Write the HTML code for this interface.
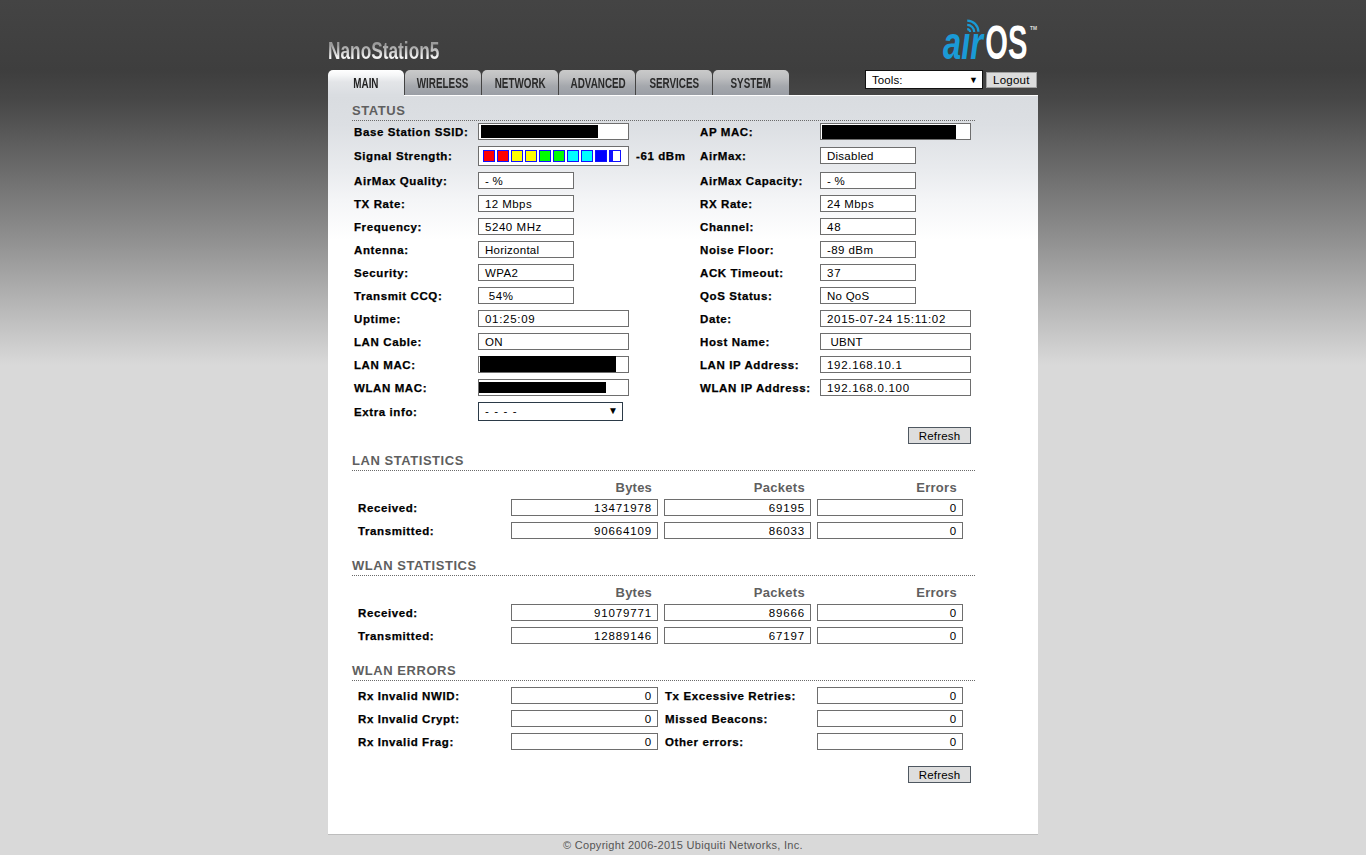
<!DOCTYPE html>
<html><head><meta charset="utf-8"><title>Main</title>
<style>
html,body{margin:0;padding:0;}
body{width:1366px;height:855px;overflow:hidden;position:relative;font-family:"Liberation Sans", sans-serif;
background:linear-gradient(to bottom,#444444 0px,#3e3e3e 70px,#474747 100px,#909090 240px,#d9d9d9 365px,#d9d9d9 855px);}
.t{position:absolute;white-space:nowrap;font-family:"Liberation Sans", sans-serif;}
.b{position:absolute;}
</style></head><body>
<div class="t" style="left:328px;top:37px;font-size:24px;line-height:28px;font-weight:bold;transform:scaleX(0.72);transform-origin:0 0;background:linear-gradient(to bottom,#9a9a9a 8px,#f4f4f4 20px);-webkit-background-clip:text;background-clip:text;color:transparent">NanoStation5</div>
<svg class="b" style="left:930px;top:10px" width="115" height="60" viewBox="0 0 115 60">
<g fill="none" stroke="#1a9ad6" stroke-width="2.2" stroke-linecap="butt">
<path d="M37.2 10.6 A11.2 11.2 0 0 1 48.4 21.8"/>
<path d="M37.2 14.9 A7 7 0 0 1 44.2 21.9"/>
<path d="M37.2 19.1 A2.9 2.9 0 0 1 40.1 22"/>
</g>
<text x="13" y="48.5" font-family="Liberation Sans" font-style="italic" font-weight="bold" font-size="46" fill="#1a9ad6" textLength="40" lengthAdjust="spacingAndGlyphs">a&#305;r</text>
<text x="55.2" y="49.3" font-family="Liberation Sans" font-weight="bold" font-size="49" fill="#ffffff" textLength="42.2" lengthAdjust="spacingAndGlyphs">OS</text>
<text x="100" y="20.3" font-family="Liberation Sans" font-weight="bold" font-size="5" fill="#dddddd" textLength="7" lengthAdjust="spacingAndGlyphs">TM</text>
</svg>
<div class="b" style="left:328px;top:70px;width:76px;height:26px;background:linear-gradient(to bottom,#ffffff 0px,#f6f7f8 5px,#e3e5e8 12px,#dadde1 25px);border-radius:5px 5px 0 0"></div>
<div class="t" style="left:328px;top:75px;width:76px;text-align:center;font-size:14px;line-height:17px;color:#222"><span style="display:inline-block;font-weight:bold;transform:scaleX(0.705)">MAIN</span></div>
<div class="b" style="left:405px;top:70px;width:76px;height:25px;background:linear-gradient(to bottom,#cacaca 0px,#bdbec0 8px,#a5a8ad 16px,#9a9ea5 25px);border-radius:5px 5px 0 0"></div>
<div class="t" style="left:405px;top:75px;width:76px;text-align:center;font-size:14px;line-height:17px;color:#2a2a2a"><span style="display:inline-block;font-weight:bold;transform:scaleX(0.705)">WIRELESS</span></div>
<div class="b" style="left:482px;top:70px;width:76px;height:25px;background:linear-gradient(to bottom,#cacaca 0px,#bdbec0 8px,#a5a8ad 16px,#9a9ea5 25px);border-radius:5px 5px 0 0"></div>
<div class="t" style="left:482px;top:75px;width:76px;text-align:center;font-size:14px;line-height:17px;color:#2a2a2a"><span style="display:inline-block;font-weight:bold;transform:scaleX(0.705)">NETWORK</span></div>
<div class="b" style="left:559px;top:70px;width:76px;height:25px;background:linear-gradient(to bottom,#cacaca 0px,#bdbec0 8px,#a5a8ad 16px,#9a9ea5 25px);border-radius:5px 5px 0 0"></div>
<div class="t" style="left:559px;top:75px;width:76px;text-align:center;font-size:14px;line-height:17px;color:#2a2a2a"><span style="display:inline-block;font-weight:bold;transform:scaleX(0.705)">ADVANCED</span></div>
<div class="b" style="left:636px;top:70px;width:76px;height:25px;background:linear-gradient(to bottom,#cacaca 0px,#bdbec0 8px,#a5a8ad 16px,#9a9ea5 25px);border-radius:5px 5px 0 0"></div>
<div class="t" style="left:636px;top:75px;width:76px;text-align:center;font-size:14px;line-height:17px;color:#2a2a2a"><span style="display:inline-block;font-weight:bold;transform:scaleX(0.705)">SERVICES</span></div>
<div class="b" style="left:713px;top:70px;width:76px;height:25px;background:linear-gradient(to bottom,#cacaca 0px,#bdbec0 8px,#a5a8ad 16px,#9a9ea5 25px);border-radius:5px 5px 0 0"></div>
<div class="t" style="left:713px;top:75px;width:76px;text-align:center;font-size:14px;line-height:17px;color:#2a2a2a"><span style="display:inline-block;font-weight:bold;transform:scaleX(0.705)">SYSTEM</span></div>
<div class="b" style="left:865px;top:70px;width:116px;height:17px;background:#fff;border:1px solid #111;"></div>
<div class="t" style="left:872px;top:73.02px;font-size:11.5px;line-height:14px;font-weight:normal;color:#000;letter-spacing:0.1px;">Tools:</div>
<div class="t" style="left:969px;top:74px;font-size:9px;line-height:12px;color:#000">&#9660;</div>
<div class="b" style="left:986px;top:72px;width:49px;height:14px;background:#dcdcdc;border:1px solid #a0a0a0;"></div>
<div class="t" style="left:993px;top:73.02px;font-size:11.5px;line-height:14px;font-weight:normal;color:#000;letter-spacing:0.25px;">Logout</div>
<div class="b" style="left:328px;top:95px;width:710px;height:739px;background:linear-gradient(to bottom,#fdfdfd 0px,#fdfdfd 1px,#d9dce0 1px,#dcdfe3 30px,#e9ebee 75px,#f4f5f7 105px,#ffffff 145px,#ffffff 100%)"></div>
<div class="b" style="left:328px;top:834px;width:710px;height:1px;background:#bdbdbd;"></div>
<div class="b" style="left:328px;top:94px;width:76px;height:3px;background:#dadde1"></div>
<div class="t" style="left:352px;top:102.50px;font-size:13px;line-height:16px;font-weight:bold;color:#5f5f5f;letter-spacing:0.55px;">STATUS</div>
<div class="b" style="left:352px;top:120px;width:623px;height:1px;background-image:linear-gradient(to right,#6a6a6a 50%,transparent 50%);background-size:2px 1px"></div>
<div class="t" style="left:354px;top:125.02px;font-size:11.5px;line-height:14px;font-weight:bold;color:#000;letter-spacing:0.6px;-webkit-text-stroke:0.25px #000;">Base Station SSID:</div>
<div class="b" style="left:478px;top:123px;width:149px;height:15px;background:#fff;border:1px solid #6e6e6e;"></div>
<div class="b" style="left:481px;top:125px;width:117px;height:13px;background:#000;"></div>
<div class="t" style="left:354px;top:149.02px;font-size:11.5px;line-height:14px;font-weight:bold;color:#000;letter-spacing:0.6px;-webkit-text-stroke:0.25px #000;">Signal Strength:</div>
<div class="b" style="left:478px;top:146px;width:149px;height:18px;background:#fff;border:1px solid #6e6e6e;"></div>
<div class="b" style="left:483px;top:150px;width:10px;height:10px;background:#ff0000;border:1px solid #1010ff;"></div>
<div class="b" style="left:497px;top:150px;width:10px;height:10px;background:#ff0000;border:1px solid #1010ff;"></div>
<div class="b" style="left:511px;top:150px;width:10px;height:10px;background:#ffff00;border:1px solid #1010ff;"></div>
<div class="b" style="left:525px;top:150px;width:10px;height:10px;background:#ffff00;border:1px solid #1010ff;"></div>
<div class="b" style="left:539px;top:150px;width:10px;height:10px;background:#00ff00;border:1px solid #1010ff;"></div>
<div class="b" style="left:553px;top:150px;width:10px;height:10px;background:#00ff00;border:1px solid #1010ff;"></div>
<div class="b" style="left:567px;top:150px;width:10px;height:10px;background:#00ffff;border:1px solid #1010ff;"></div>
<div class="b" style="left:581px;top:150px;width:10px;height:10px;background:#00ffff;border:1px solid #1010ff;"></div>
<div class="b" style="left:595px;top:150px;width:10px;height:10px;background:#0000ff;border:1px solid #1010ff;"></div>
<div class="b" style="left:609px;top:150px;width:10px;height:10px;background:#ffffff;border:1px solid #1010ff;"></div>
<div class="b" style="left:610px;top:151px;width:3px;height:10px;background:#1010ff;"></div>
<div class="t" style="left:636px;top:149.02px;font-size:11.5px;line-height:14px;font-weight:bold;color:#000;letter-spacing:0.6px;-webkit-text-stroke:0.25px #000;">-61 dBm</div>
<div class="t" style="left:354px;top:174.02px;font-size:11.5px;line-height:14px;font-weight:bold;color:#000;letter-spacing:0.6px;-webkit-text-stroke:0.25px #000;">AirMax Quality:</div>
<div class="b" style="left:478px;top:172px;width:94px;height:15px;background:#fff;border:1px solid #6e6e6e;"></div>
<div class="t" style="left:485px;top:174.02px;font-size:11.5px;line-height:14px;font-weight:normal;color:#000;letter-spacing:0.25px;">- %</div>
<div class="t" style="left:354px;top:197.02px;font-size:11.5px;line-height:14px;font-weight:bold;color:#000;letter-spacing:0.6px;-webkit-text-stroke:0.25px #000;">TX Rate:</div>
<div class="b" style="left:478px;top:195px;width:94px;height:15px;background:#fff;border:1px solid #6e6e6e;"></div>
<div class="t" style="left:485px;top:197.02px;font-size:11.5px;line-height:14px;font-weight:normal;color:#000;letter-spacing:0.42px;">12 Mbps</div>
<div class="t" style="left:354px;top:220.02px;font-size:11.5px;line-height:14px;font-weight:bold;color:#000;letter-spacing:0.6px;-webkit-text-stroke:0.25px #000;">Frequency:</div>
<div class="b" style="left:478px;top:218px;width:94px;height:15px;background:#fff;border:1px solid #6e6e6e;"></div>
<div class="t" style="left:485px;top:220.02px;font-size:11.5px;line-height:14px;font-weight:normal;color:#000;letter-spacing:0.55px;">5240 MHz</div>
<div class="t" style="left:354px;top:243.02px;font-size:11.5px;line-height:14px;font-weight:bold;color:#000;letter-spacing:0.6px;-webkit-text-stroke:0.25px #000;">Antenna:</div>
<div class="b" style="left:478px;top:241px;width:94px;height:15px;background:#fff;border:1px solid #6e6e6e;"></div>
<div class="t" style="left:485px;top:243.02px;font-size:11.5px;line-height:14px;font-weight:normal;color:#000;letter-spacing:0.25px;">Horizontal</div>
<div class="t" style="left:354px;top:266.02px;font-size:11.5px;line-height:14px;font-weight:bold;color:#000;letter-spacing:0.6px;-webkit-text-stroke:0.25px #000;">Security:</div>
<div class="b" style="left:478px;top:264px;width:94px;height:15px;background:#fff;border:1px solid #6e6e6e;"></div>
<div class="t" style="left:485px;top:266.02px;font-size:11.5px;line-height:14px;font-weight:normal;color:#000;letter-spacing:0.4px;">WPA2</div>
<div class="t" style="left:354px;top:289.02px;font-size:11.5px;line-height:14px;font-weight:bold;color:#000;letter-spacing:0.6px;-webkit-text-stroke:0.25px #000;">Transmit CCQ:</div>
<div class="b" style="left:478px;top:287px;width:94px;height:15px;background:#fff;border:1px solid #6e6e6e;"></div>
<div class="t" style="left:485px;top:289.02px;font-size:11.5px;line-height:14px;font-weight:normal;color:#000;letter-spacing:0.55px;">&nbsp;54%</div>
<div class="t" style="left:354px;top:312.02px;font-size:11.5px;line-height:14px;font-weight:bold;color:#000;letter-spacing:0.6px;-webkit-text-stroke:0.25px #000;">Uptime:</div>
<div class="b" style="left:478px;top:310px;width:149px;height:15px;background:#fff;border:1px solid #6e6e6e;"></div>
<div class="t" style="left:485px;top:312.02px;font-size:11.5px;line-height:14px;font-weight:normal;color:#000;letter-spacing:0.7px;">01:25:09</div>
<div class="t" style="left:354px;top:335.02px;font-size:11.5px;line-height:14px;font-weight:bold;color:#000;letter-spacing:0.6px;-webkit-text-stroke:0.25px #000;">LAN Cable:</div>
<div class="b" style="left:478px;top:333px;width:149px;height:15px;background:#fff;border:1px solid #6e6e6e;"></div>
<div class="t" style="left:485px;top:335.02px;font-size:11.5px;line-height:14px;font-weight:normal;color:#000;letter-spacing:0.25px;">ON</div>
<div class="t" style="left:354px;top:358.02px;font-size:11.5px;line-height:14px;font-weight:bold;color:#000;letter-spacing:0.6px;-webkit-text-stroke:0.25px #000;">LAN MAC:</div>
<div class="b" style="left:478px;top:356px;width:149px;height:15px;background:#fff;border:1px solid #6e6e6e;"></div>
<div class="b" style="left:480px;top:356px;width:136px;height:16px;background:#000;"></div>
<div class="t" style="left:354px;top:381.02px;font-size:11.5px;line-height:14px;font-weight:bold;color:#000;letter-spacing:0.6px;-webkit-text-stroke:0.25px #000;">WLAN MAC:</div>
<div class="b" style="left:478px;top:379px;width:149px;height:15px;background:#fff;border:1px solid #6e6e6e;"></div>
<div class="b" style="left:479px;top:382px;width:127px;height:11px;background:#000;"></div>
<div class="t" style="left:354px;top:405.02px;font-size:11.5px;line-height:14px;font-weight:bold;color:#000;letter-spacing:0.6px;-webkit-text-stroke:0.25px #000;">Extra info:</div>
<div class="b" style="left:478px;top:402px;width:143px;height:17px;background:#fff;border:1px solid #2b3a48;"></div>
<div class="t" style="left:485px;top:404.02px;font-size:11.5px;line-height:14px;font-weight:normal;color:#000;letter-spacing:1.1px;">- - - -</div>
<div class="t" style="left:608px;top:405px;font-size:10px;line-height:12px;color:#000">&#9660;</div>
<div class="t" style="left:700px;top:125.02px;font-size:11.5px;line-height:14px;font-weight:bold;color:#000;letter-spacing:0.6px;-webkit-text-stroke:0.25px #000;">AP MAC:</div>
<div class="b" style="left:820px;top:123px;width:149px;height:15px;background:#fff;border:1px solid #6e6e6e;"></div>
<div class="b" style="left:822px;top:125px;width:134px;height:14px;background:#000;"></div>
<div class="t" style="left:700px;top:149.02px;font-size:11.5px;line-height:14px;font-weight:bold;color:#000;letter-spacing:0.6px;-webkit-text-stroke:0.25px #000;">AirMax:</div>
<div class="b" style="left:820px;top:147px;width:94px;height:15px;background:#fff;border:1px solid #6e6e6e;"></div>
<div class="t" style="left:827px;top:149.02px;font-size:11.5px;line-height:14px;font-weight:normal;color:#000;letter-spacing:0.25px;">Disabled</div>
<div class="t" style="left:700px;top:174.02px;font-size:11.5px;line-height:14px;font-weight:bold;color:#000;letter-spacing:0.6px;-webkit-text-stroke:0.25px #000;">AirMax Capacity:</div>
<div class="b" style="left:820px;top:172px;width:94px;height:15px;background:#fff;border:1px solid #6e6e6e;"></div>
<div class="t" style="left:827px;top:174.02px;font-size:11.5px;line-height:14px;font-weight:normal;color:#000;letter-spacing:0.25px;">- %</div>
<div class="t" style="left:700px;top:197.02px;font-size:11.5px;line-height:14px;font-weight:bold;color:#000;letter-spacing:0.6px;-webkit-text-stroke:0.25px #000;">RX Rate:</div>
<div class="b" style="left:820px;top:195px;width:94px;height:15px;background:#fff;border:1px solid #6e6e6e;"></div>
<div class="t" style="left:827px;top:197.02px;font-size:11.5px;line-height:14px;font-weight:normal;color:#000;letter-spacing:0.42px;">24 Mbps</div>
<div class="t" style="left:700px;top:220.02px;font-size:11.5px;line-height:14px;font-weight:bold;color:#000;letter-spacing:0.6px;-webkit-text-stroke:0.25px #000;">Channel:</div>
<div class="b" style="left:820px;top:218px;width:94px;height:15px;background:#fff;border:1px solid #6e6e6e;"></div>
<div class="t" style="left:827px;top:220.02px;font-size:11.5px;line-height:14px;font-weight:normal;color:#000;letter-spacing:0.85px;">48</div>
<div class="t" style="left:700px;top:243.02px;font-size:11.5px;line-height:14px;font-weight:bold;color:#000;letter-spacing:0.6px;-webkit-text-stroke:0.25px #000;">Noise Floor:</div>
<div class="b" style="left:820px;top:241px;width:94px;height:15px;background:#fff;border:1px solid #6e6e6e;"></div>
<div class="t" style="left:827px;top:243.02px;font-size:11.5px;line-height:14px;font-weight:normal;color:#000;letter-spacing:0.42px;">-89 dBm</div>
<div class="t" style="left:700px;top:266.02px;font-size:11.5px;line-height:14px;font-weight:bold;color:#000;letter-spacing:0.6px;-webkit-text-stroke:0.25px #000;">ACK Timeout:</div>
<div class="b" style="left:820px;top:264px;width:94px;height:15px;background:#fff;border:1px solid #6e6e6e;"></div>
<div class="t" style="left:827px;top:266.02px;font-size:11.5px;line-height:14px;font-weight:normal;color:#000;letter-spacing:0.85px;">37</div>
<div class="t" style="left:700px;top:289.02px;font-size:11.5px;line-height:14px;font-weight:bold;color:#000;letter-spacing:0.6px;-webkit-text-stroke:0.25px #000;">QoS Status:</div>
<div class="b" style="left:820px;top:287px;width:94px;height:15px;background:#fff;border:1px solid #6e6e6e;"></div>
<div class="t" style="left:827px;top:289.02px;font-size:11.5px;line-height:14px;font-weight:normal;color:#000;letter-spacing:0.25px;">No QoS</div>
<div class="t" style="left:700px;top:312.02px;font-size:11.5px;line-height:14px;font-weight:bold;color:#000;letter-spacing:0.6px;-webkit-text-stroke:0.25px #000;">Date:</div>
<div class="b" style="left:820px;top:310px;width:149px;height:15px;background:#fff;border:1px solid #6e6e6e;"></div>
<div class="t" style="left:827px;top:312.02px;font-size:11.5px;line-height:14px;font-weight:normal;color:#000;letter-spacing:0.69px;">2015-07-24 15:11:02</div>
<div class="t" style="left:700px;top:335.02px;font-size:11.5px;line-height:14px;font-weight:bold;color:#000;letter-spacing:0.6px;-webkit-text-stroke:0.25px #000;">Host Name:</div>
<div class="b" style="left:820px;top:333px;width:149px;height:15px;background:#fff;border:1px solid #6e6e6e;"></div>
<div class="t" style="left:827px;top:335.02px;font-size:11.5px;line-height:14px;font-weight:normal;color:#000;letter-spacing:0.25px;">&nbsp;UBNT</div>
<div class="t" style="left:700px;top:358.02px;font-size:11.5px;line-height:14px;font-weight:bold;color:#000;letter-spacing:0.6px;-webkit-text-stroke:0.25px #000;">LAN IP Address:</div>
<div class="b" style="left:820px;top:356px;width:149px;height:15px;background:#fff;border:1px solid #6e6e6e;"></div>
<div class="t" style="left:827px;top:358.02px;font-size:11.5px;line-height:14px;font-weight:normal;color:#000;letter-spacing:0.7px;">192.168.10.1</div>
<div class="t" style="left:700px;top:381.02px;font-size:11.5px;line-height:14px;font-weight:bold;color:#000;letter-spacing:0.6px;-webkit-text-stroke:0.25px #000;">WLAN IP Address:</div>
<div class="b" style="left:820px;top:379px;width:149px;height:15px;background:#fff;border:1px solid #6e6e6e;"></div>
<div class="t" style="left:827px;top:381.02px;font-size:11.5px;line-height:14px;font-weight:normal;color:#000;letter-spacing:0.71px;">192.168.0.100</div>
<div class="b" style="left:908px;top:427px;width:61px;height:15px;background:#dedede;border:1px solid #4f5861;"></div>
<div class="t" style="left:908px;top:428px;width:63px;height:17px;text-align:center;font-size:11.5px;line-height:17px;letter-spacing:0.2px;color:#000">Refresh</div>
<div class="t" style="left:352px;top:452.50px;font-size:13px;line-height:16px;font-weight:bold;color:#5f5f5f;letter-spacing:0.55px;">LAN STATISTICS</div>
<div class="b" style="left:352px;top:470px;width:623px;height:1px;background-image:linear-gradient(to right,#6a6a6a 50%,transparent 50%);background-size:2px 1px"></div>
<div class="t" style="right:714px;top:479.50px;font-size:13px;line-height:16px;font-weight:bold;color:#5f5f5f;letter-spacing:0.2px;">Bytes</div>
<div class="t" style="right:561px;top:479.50px;font-size:13px;line-height:16px;font-weight:bold;color:#5f5f5f;letter-spacing:0.3px;">Packets</div>
<div class="t" style="right:409px;top:479.50px;font-size:13px;line-height:16px;font-weight:bold;color:#5f5f5f;letter-spacing:0.3px;">Errors</div>
<div class="t" style="left:358px;top:501.02px;font-size:11.5px;line-height:14px;font-weight:bold;color:#000;letter-spacing:0.6px;-webkit-text-stroke:0.25px #000;">Received:</div>
<div class="b" style="left:511px;top:499px;width:145px;height:15px;background:#fff;border:1px solid #6e6e6e;"></div>
<div class="t" style="right:714px;top:501.02px;font-size:11.5px;line-height:14px;font-weight:normal;color:#000;letter-spacing:0.85px;">13471978</div>
<div class="b" style="left:664px;top:499px;width:145px;height:15px;background:#fff;border:1px solid #6e6e6e;"></div>
<div class="t" style="right:561px;top:501.02px;font-size:11.5px;line-height:14px;font-weight:normal;color:#000;letter-spacing:0.85px;">69195</div>
<div class="b" style="left:817px;top:499px;width:144px;height:15px;background:#fff;border:1px solid #6e6e6e;"></div>
<div class="t" style="right:409px;top:501.02px;font-size:11.5px;line-height:14px;font-weight:normal;color:#000;letter-spacing:0.85px;">0</div>
<div class="t" style="left:358px;top:524.02px;font-size:11.5px;line-height:14px;font-weight:bold;color:#000;letter-spacing:0.6px;-webkit-text-stroke:0.25px #000;">Transmitted:</div>
<div class="b" style="left:511px;top:522px;width:145px;height:15px;background:#fff;border:1px solid #6e6e6e;"></div>
<div class="t" style="right:714px;top:524.02px;font-size:11.5px;line-height:14px;font-weight:normal;color:#000;letter-spacing:0.85px;">90664109</div>
<div class="b" style="left:664px;top:522px;width:145px;height:15px;background:#fff;border:1px solid #6e6e6e;"></div>
<div class="t" style="right:561px;top:524.02px;font-size:11.5px;line-height:14px;font-weight:normal;color:#000;letter-spacing:0.85px;">86033</div>
<div class="b" style="left:817px;top:522px;width:144px;height:15px;background:#fff;border:1px solid #6e6e6e;"></div>
<div class="t" style="right:409px;top:524.02px;font-size:11.5px;line-height:14px;font-weight:normal;color:#000;letter-spacing:0.85px;">0</div>
<div class="t" style="left:352px;top:557.50px;font-size:13px;line-height:16px;font-weight:bold;color:#5f5f5f;letter-spacing:0.55px;">WLAN STATISTICS</div>
<div class="b" style="left:352px;top:575px;width:623px;height:1px;background-image:linear-gradient(to right,#6a6a6a 50%,transparent 50%);background-size:2px 1px"></div>
<div class="t" style="right:714px;top:584.50px;font-size:13px;line-height:16px;font-weight:bold;color:#5f5f5f;letter-spacing:0.2px;">Bytes</div>
<div class="t" style="right:561px;top:584.50px;font-size:13px;line-height:16px;font-weight:bold;color:#5f5f5f;letter-spacing:0.3px;">Packets</div>
<div class="t" style="right:409px;top:584.50px;font-size:13px;line-height:16px;font-weight:bold;color:#5f5f5f;letter-spacing:0.3px;">Errors</div>
<div class="t" style="left:358px;top:606.02px;font-size:11.5px;line-height:14px;font-weight:bold;color:#000;letter-spacing:0.6px;-webkit-text-stroke:0.25px #000;">Received:</div>
<div class="b" style="left:511px;top:604px;width:145px;height:15px;background:#fff;border:1px solid #6e6e6e;"></div>
<div class="t" style="right:714px;top:606.02px;font-size:11.5px;line-height:14px;font-weight:normal;color:#000;letter-spacing:0.85px;">91079771</div>
<div class="b" style="left:664px;top:604px;width:145px;height:15px;background:#fff;border:1px solid #6e6e6e;"></div>
<div class="t" style="right:561px;top:606.02px;font-size:11.5px;line-height:14px;font-weight:normal;color:#000;letter-spacing:0.85px;">89666</div>
<div class="b" style="left:817px;top:604px;width:144px;height:15px;background:#fff;border:1px solid #6e6e6e;"></div>
<div class="t" style="right:409px;top:606.02px;font-size:11.5px;line-height:14px;font-weight:normal;color:#000;letter-spacing:0.85px;">0</div>
<div class="t" style="left:358px;top:629.02px;font-size:11.5px;line-height:14px;font-weight:bold;color:#000;letter-spacing:0.6px;-webkit-text-stroke:0.25px #000;">Transmitted:</div>
<div class="b" style="left:511px;top:627px;width:145px;height:15px;background:#fff;border:1px solid #6e6e6e;"></div>
<div class="t" style="right:714px;top:629.02px;font-size:11.5px;line-height:14px;font-weight:normal;color:#000;letter-spacing:0.85px;">12889146</div>
<div class="b" style="left:664px;top:627px;width:145px;height:15px;background:#fff;border:1px solid #6e6e6e;"></div>
<div class="t" style="right:561px;top:629.02px;font-size:11.5px;line-height:14px;font-weight:normal;color:#000;letter-spacing:0.85px;">67197</div>
<div class="b" style="left:817px;top:627px;width:144px;height:15px;background:#fff;border:1px solid #6e6e6e;"></div>
<div class="t" style="right:409px;top:629.02px;font-size:11.5px;line-height:14px;font-weight:normal;color:#000;letter-spacing:0.85px;">0</div>
<div class="t" style="left:352px;top:662.50px;font-size:13px;line-height:16px;font-weight:bold;color:#5f5f5f;letter-spacing:0.55px;">WLAN ERRORS</div>
<div class="b" style="left:352px;top:680px;width:623px;height:1px;background-image:linear-gradient(to right,#6a6a6a 50%,transparent 50%);background-size:2px 1px"></div>
<div class="t" style="left:358px;top:689.02px;font-size:11.5px;line-height:14px;font-weight:bold;color:#000;letter-spacing:0.6px;-webkit-text-stroke:0.25px #000;">Rx Invalid NWID:</div>
<div class="b" style="left:511px;top:687px;width:145px;height:15px;background:#fff;border:1px solid #6e6e6e;"></div>
<div class="t" style="right:714px;top:689.02px;font-size:11.5px;line-height:14px;font-weight:normal;color:#000;letter-spacing:0.85px;">0</div>
<div class="t" style="left:665px;top:689.02px;font-size:11.5px;line-height:14px;font-weight:bold;color:#000;letter-spacing:0.6px;-webkit-text-stroke:0.25px #000;">Tx Excessive Retries:</div>
<div class="b" style="left:817px;top:687px;width:144px;height:15px;background:#fff;border:1px solid #6e6e6e;"></div>
<div class="t" style="right:409px;top:689.02px;font-size:11.5px;line-height:14px;font-weight:normal;color:#000;letter-spacing:0.85px;">0</div>
<div class="t" style="left:358px;top:712.02px;font-size:11.5px;line-height:14px;font-weight:bold;color:#000;letter-spacing:0.6px;-webkit-text-stroke:0.25px #000;">Rx Invalid Crypt:</div>
<div class="b" style="left:511px;top:710px;width:145px;height:15px;background:#fff;border:1px solid #6e6e6e;"></div>
<div class="t" style="right:714px;top:712.02px;font-size:11.5px;line-height:14px;font-weight:normal;color:#000;letter-spacing:0.85px;">0</div>
<div class="t" style="left:665px;top:712.02px;font-size:11.5px;line-height:14px;font-weight:bold;color:#000;letter-spacing:0.6px;-webkit-text-stroke:0.25px #000;">Missed Beacons:</div>
<div class="b" style="left:817px;top:710px;width:144px;height:15px;background:#fff;border:1px solid #6e6e6e;"></div>
<div class="t" style="right:409px;top:712.02px;font-size:11.5px;line-height:14px;font-weight:normal;color:#000;letter-spacing:0.85px;">0</div>
<div class="t" style="left:358px;top:735.02px;font-size:11.5px;line-height:14px;font-weight:bold;color:#000;letter-spacing:0.6px;-webkit-text-stroke:0.25px #000;">Rx Invalid Frag:</div>
<div class="b" style="left:511px;top:733px;width:145px;height:15px;background:#fff;border:1px solid #6e6e6e;"></div>
<div class="t" style="right:714px;top:735.02px;font-size:11.5px;line-height:14px;font-weight:normal;color:#000;letter-spacing:0.85px;">0</div>
<div class="t" style="left:665px;top:735.02px;font-size:11.5px;line-height:14px;font-weight:bold;color:#000;letter-spacing:0.6px;-webkit-text-stroke:0.25px #000;">Other errors:</div>
<div class="b" style="left:817px;top:733px;width:144px;height:15px;background:#fff;border:1px solid #6e6e6e;"></div>
<div class="t" style="right:409px;top:735.02px;font-size:11.5px;line-height:14px;font-weight:normal;color:#000;letter-spacing:0.85px;">0</div>
<div class="b" style="left:908px;top:766px;width:61px;height:15px;background:#dedede;border:1px solid #4f5861;"></div>
<div class="t" style="left:908px;top:767px;width:63px;height:17px;text-align:center;font-size:11.5px;line-height:17px;letter-spacing:0.2px;color:#000">Refresh</div>
<div class="t" style="left:563px;top:838.19px;font-size:11px;line-height:14px;font-weight:normal;color:#555;letter-spacing:0.3px;">&copy; Copyright 2006-2015 Ubiquiti Networks, Inc.</div>
</body></html>
